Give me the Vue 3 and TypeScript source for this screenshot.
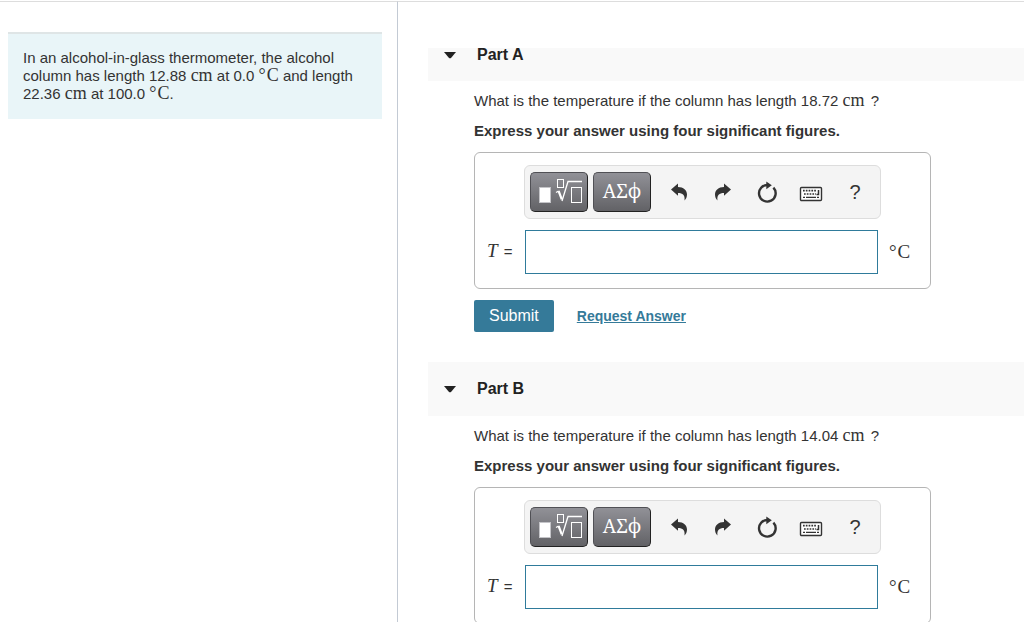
<script setup lang="ts">
import { reactive } from 'vue'

interface Part {
  id: string
  title: string
  length: string
  answer: string
  open: boolean
}

const parts = reactive<Part[]>([
  { id: 'a', title: 'Part A', length: '18.72', answer: '', open: true },
  { id: 'b', title: 'Part B', length: '14.04', answer: '', open: true },
])
</script>

<template>
  <main class="page">
    <aside class="intro">
      <p class="problem">
        In an alcohol-in-glass thermometer, the alcohol column has length 12.88
        <span class="math">cm</span> at 0.0 <span class="math"><span class="deg">°</span>C</span> and length
        22.36 <span class="math">cm</span> at 100.0 <span class="math"><span class="deg">°</span>C</span>.
      </p>
    </aside>

    <div class="parts">
      <section v-for="part in parts" :key="part.id" class="part">
        <h2 class="part-head">
          <button type="button" class="toggle" :aria-expanded="part.open" @click="part.open = !part.open">
            <svg width="12" height="7" viewBox="0 0 12 7" aria-hidden="true">
              <path d="M0 0h12L7 5.9q-1 .9-2 0z" fill="#222" />
            </svg>
            <span>{{ part.title }}</span>
          </button>
        </h2>
        <form v-if="part.open" class="part-body" @submit.prevent>
          <p class="question">
            What is the temperature if the column has length {{ part.length }} <span class="math cm">cm</span> ?
          </p>
          <p class="hint">Express your answer using four significant figures.</p>

          <div class="answer-box">
            <div class="toolbar">
              <button type="button" class="dark" aria-label="Templates">
                <svg width="46" height="28" viewBox="0 0 46 28" aria-hidden="true">
                  <rect x="3.5" y="9.5" width="11" height="15" fill="#fff" stroke="#c4c4c8" />
                  <rect x="21.5" y="1.5" width="6" height="8" fill="none" stroke="#fff" />
                  <path d="M20 14.5l2.6-1.6" fill="none" stroke="#fff" stroke-width="1.2" />
                  <path d="M22.6 13l3.2 8.4" fill="none" stroke="#fff" stroke-width="2.2" />
                  <path d="M26 23L32 3.5H46" fill="none" stroke="#fff" stroke-width="1.3" />
                  <rect x="35.5" y="9.5" width="10" height="15" fill="none" stroke="#fff" />
                </svg>
              </button>
              <button type="button" class="dark greek" aria-label="Symbols">ΑΣϕ</button>
              <div class="tools">
                <button type="button" class="tool" aria-label="Undo">
                  <svg width="18" height="18" viewBox="0 0 18 18" aria-hidden="true">
                    <path d="M1 6.5L8 .5V4C13.5 4.2 17 7 17 11.5 17 14 16 16 14.5 17.5 15.2 12.2 12.8 10 8 10V12.7Z" fill="#333" />
                  </svg>
                </button>
                <button type="button" class="tool" aria-label="Redo">
                  <svg width="18" height="18" viewBox="0 0 18 18" aria-hidden="true">
                    <path d="M17 6.5L10 .5V4C4.5 4.2 1 7 1 11.5 1 14 2 16 3.5 17.5 2.8 12.2 5.2 10 10 10V12.7Z" fill="#333" />
                  </svg>
                </button>
                <button type="button" class="tool" aria-label="Reset">
                  <svg width="20" height="22" viewBox="0 0 20 22" aria-hidden="true">
                    <path d="M11 4A8.3 8.3 0 1 0 16.4 6.6" fill="none" stroke="#333" stroke-width="2.4" />
                    <path d="M9.3 0.4L14.8 4.3 9.3 8.2Z" fill="#333" />
                  </svg>
                </button>
                <button type="button" class="tool" aria-label="Keyboard shortcuts">
                  <svg width="24" height="20" viewBox="0 0 24 20" aria-hidden="true">
                    <rect x="1.5" y="5.5" width="21" height="13" rx="1" fill="#fff" stroke="#333" stroke-width="1.4" />
                    <path d="M4 8.7h14M5 12h12" stroke="#333" stroke-width="1.7" stroke-dasharray="1.7 1.1" />
                    <path d="M19.5 7.9v4.6h-2" fill="none" stroke="#333" stroke-width="1.5" />
                    <path d="M4 15.4h2M7 15.4h10M18 15.4h2" stroke="#333" stroke-width="1.4" />
                  </svg>
                </button>
                <button type="button" class="tool help" aria-label="Help">?</button>
              </div>
            </div>
            <label class="label" :for="'answer-' + part.id"><i>T</i> =</label>
            <input :id="'answer-' + part.id" v-model="part.answer" class="field" type="text" autocomplete="off" />
            <span class="unit"><span class="deg">°</span>C</span>
          </div>

          <div class="actions">
            <button type="submit" class="submit">Submit</button>
            <a href="#" class="request" @click.prevent>Request Answer</a>
          </div>
        </form>
      </section>
    </div>
  </main>
</template>

<style>
body {
  background: #fff;
}
</style>

<style scoped>
.page {
  display: grid;
  grid-template-columns: 398px minmax(0, 1fr);
  box-sizing: border-box;
  height: 100vh;
  padding-top: 1px;
  overflow: hidden;
  color: #333;
  font-family: "Liberation Sans", Arial, sans-serif;
  font-size: 15px;
  line-height: 18px;
}
.intro {
  box-sizing: border-box;
  padding: 30px 15px 0 8px;
  border-top: 1px solid #ddd;
  border-right: 1px solid #c3cad4;
}
.problem {
  margin: 0;
  padding: 15px 15px 16px;
  border-top: 2px solid #dfe5e6;
  background: #e9f5f8;
}
.math,
.unit,
.label i {
  font-family: "Liberation Serif", "Times New Roman", serif;
  font-size: 18px;
  line-height: 16px;
}
.deg {
  margin-right: 1px;
}
.cm {
  margin-right: 2px;
}
.parts {
  padding: 46px 0 0 30px;
  border-top: 1px solid #ddd;
  overflow: hidden;
}
.part-head {
  display: flex;
  align-items: center;
  height: 54px;
  margin: 0;
  background: #f9f9f9;
}
.part:first-child .part-head {
  align-items: flex-start;
  height: 33px;
}
.toggle {
  display: flex;
  align-items: center;
  gap: 21px;
  padding: 0 16px;
  border: 0;
  background: none;
  color: #222;
  font: bold 16px/14px "Liberation Sans", Arial, sans-serif;
}
.part-body {
  padding: 11px 16px 30px 46px;
}
.question,
.hint {
  margin: 0 0 12px;
}
.hint {
  font-weight: bold;
}
.answer-box {
  display: grid;
  grid-template-columns: 38px minmax(0, 353px) 1fr;
  row-gap: 11px;
  align-items: center;
  box-sizing: border-box;
  max-width: 457px;
  padding: 12px 12px 14px;
  border: 1px solid #b5b5b5;
  border-radius: 6px;
}
.toolbar {
  display: flex;
  align-items: center;
  grid-column: 2 / 4;
  justify-self: start;
  gap: 5px;
  box-sizing: border-box;
  height: 54px;
  margin-left: -1px;
  padding: 0 3px 0 5px;
  border: 1px solid #ddd;
  border-radius: 6px;
  background: #f4f4f4;
}
.dark {
  display: flex;
  align-items: center;
  justify-content: center;
  box-sizing: border-box;
  width: 58px;
  height: 40px;
  padding: 0;
  border: 1px solid #505055;
  border-right-color: #222;
  border-bottom-color: #222;
  border-radius: 5px;
  background: linear-gradient(#919197, #626266);
  color: #fff;
}
.greek {
  padding-bottom: 3px;
  font: 19px/24px "Noto Serif", "Liberation Serif", serif;
}
.tools {
  display: flex;
  padding-left: 1px;
}
.tool {
  display: flex;
  align-items: center;
  justify-content: center;
  width: 44px;
  height: 40px;
  padding: 0;
  border: 0;
  background: none;
  color: #333;
}
.help {
  font: 20px/24px "Liberation Sans", Arial, sans-serif;
}
.field {
  box-sizing: border-box;
  width: 100%;
  height: 44px;
  padding: 0 8px;
  border: 1px solid #2f7b9b;
  background: #fff;
  font: 18px "Liberation Serif", serif;
}
.unit {
  padding-left: 11px;
  font-size: 19px;
}
.label i {
  margin-right: 2px;
  font-size: 19px;
}
.actions {
  display: flex;
  align-items: center;
  gap: 23px;
  margin-top: 11px;
}
.submit {
  height: 32px;
  padding: 0 15px;
  border: 0;
  border-radius: 2px;
  background: #357a99;
  color: #fff;
  font: 16px "Liberation Sans", Arial, sans-serif;
}
.request {
  color: #357a99;
  font-size: 14px;
  font-weight: bold;
}
</style>
